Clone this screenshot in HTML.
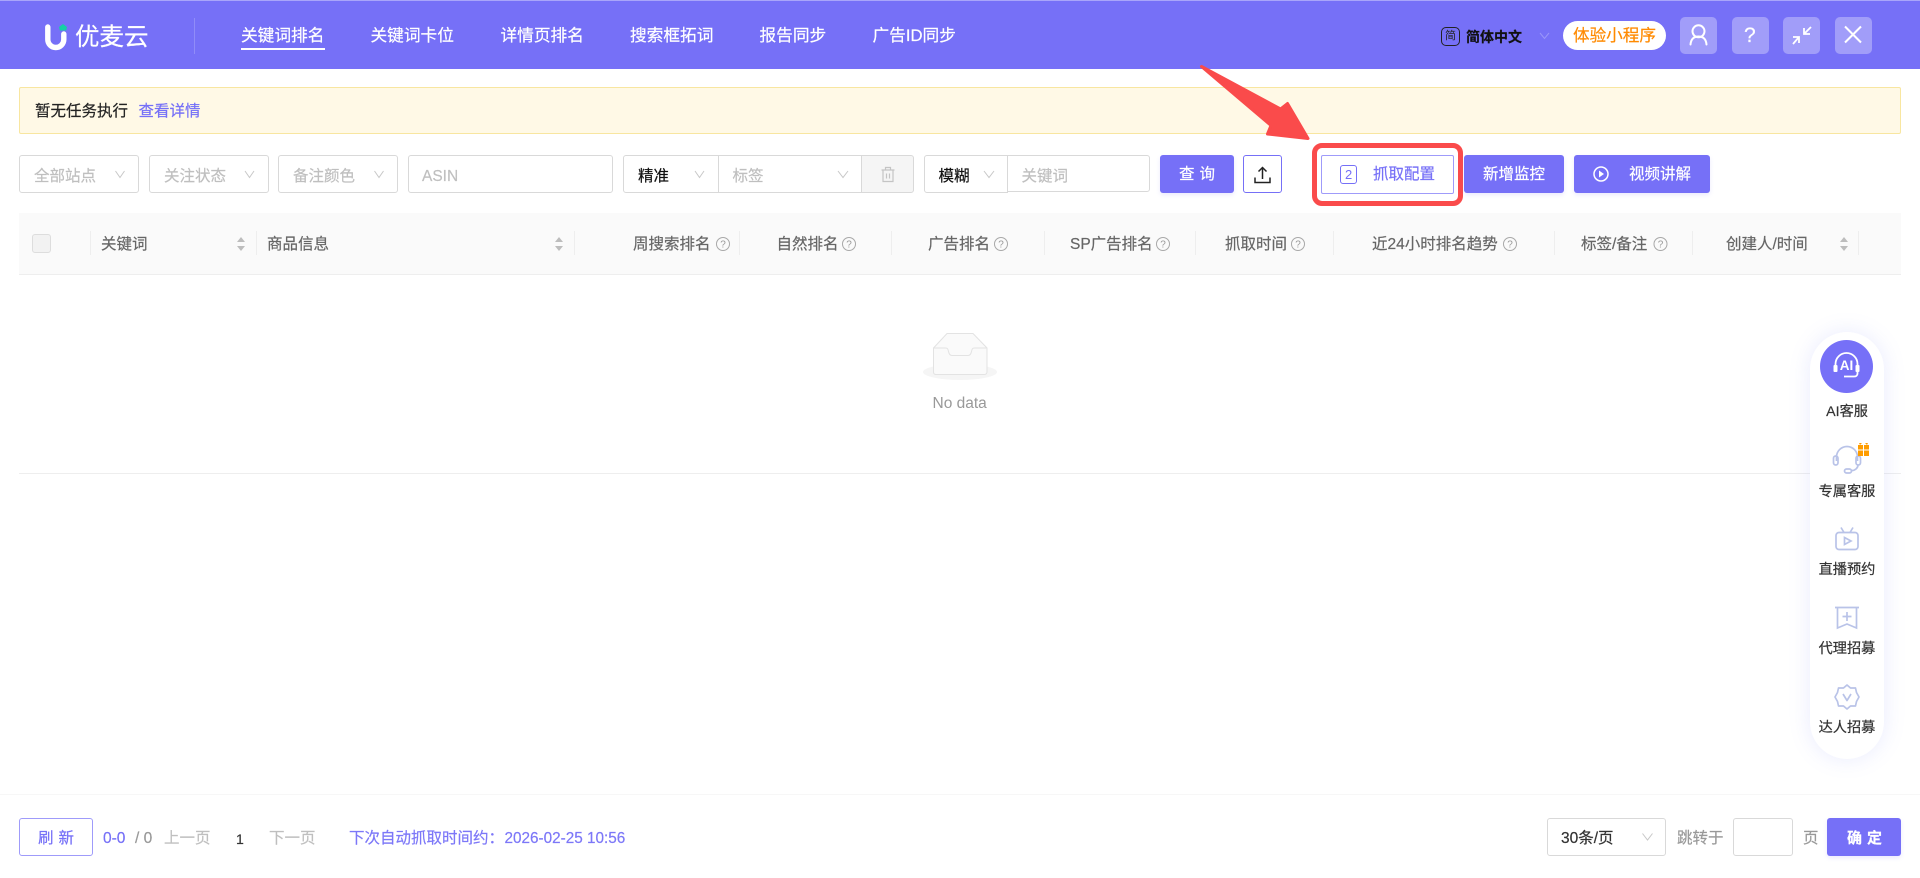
<!DOCTYPE html>
<html lang="zh">
<head>
<meta charset="utf-8">
<title>优麦云</title>
<style>
*{box-sizing:border-box}
html,body{margin:0;padding:0;width:1920px;height:878px;overflow:hidden;background:#fff;font-family:"Liberation Sans","Noto Sans CJK SC",sans-serif}
.a{position:absolute}
.t{position:absolute;white-space:nowrap;line-height:20px;font-size:15.5px;-webkit-text-stroke:.2px currentColor}
.n{color:#fff;font-size:16.7px;top:26px}
.box{position:absolute;background:#fff;border:1px solid #d9d9d9;border-radius:3px;top:155px;height:38px}
.ph{color:#bfbfbf;top:167px}
.hd{color:#666;top:235px}
.dv{position:absolute;top:231px;width:1px;height:24px;background:#eee}
.btn{position:absolute;top:155px;height:38px;background:#7670f7;border-radius:3px;box-shadow:0 2px 4px rgba(118,112,247,.15)}
.w{color:#fff;top:165px;font-size:15.5px}
.hb{position:absolute;top:17px;width:37px;height:37px;border-radius:5px;background:#a19df9}
.sl{color:#333;font-size:14.2px;width:74px;left:1810px;text-align:center}
.f{top:829px;font-size:15.5px}
svg{position:absolute;overflow:visible}
</style>
</head>
<body>
<!-- header -->
<div class="a" style="left:0;top:0;width:1920px;height:69px;background:#7670f7;border-top:1px solid #a9a5fa"></div>
<svg style="left:45px;top:24px" width="24" height="26" viewBox="0 0 24 26"><path d="M2.800 3v12.500a8 8 0 0 0 16 0V10" fill="none" stroke="#fff" stroke-width="5.400" stroke-linecap="round"/><path d="M14 3l4-3 4 3-.8 3.500h-6.400z" fill="#14d0a5"/></svg>
<span class="t" style="left:75px;top:26px;color:#fff;font-size:24.500px;line-height:24px">优麦云</span>
<div class="a" style="left:194px;top:18px;width:1px;height:36px;background:#908cf8"></div>
<span class="t n" style="left:241px">关键词排名</span>
<div class="a" style="left:241px;top:48px;width:84px;height:2px;background:#fff"></div>
<span class="t n" style="left:370.500px">关键词卡位</span>
<span class="t n" style="left:500.500px">详情页排名</span>
<span class="t n" style="left:630px">搜索框拓词</span>
<span class="t n" style="left:759.500px">报告同步</span>
<span class="t n" style="left:872.500px">广告ID同步</span>

<div class="a" style="left:1441px;top:27px;width:19px;height:19px;border:1.500px solid #222;border-radius:5px"></div>
<span class="t" style="left:1445px;top:26px;font-size:11px;color:#222;-webkit-text-stroke:0">简</span>
<span class="t" style="left:1466px;top:27px;font-size:14px;font-weight:700;color:#111">简体中文</span>
<svg style="left:1539px;top:32px" width="11" height="8"><path d="M1 1l4.500 5.500L10 1" fill="none" stroke="#9a96f9" stroke-width="1"/></svg>
<div class="a" style="left:1563px;top:21px;width:103px;height:29px;background:#fff;border-radius:15px"></div>
<span class="t" style="left:1573px;top:26px;font-size:16.600px;color:#ff8a00">体验小程序</span>

<div class="hb" style="left:1680px"></div>
<div class="hb" style="left:1732px"></div>
<div class="hb" style="left:1783px"></div>
<div class="hb" style="left:1835px"></div>
<svg style="left:1680px;top:17px" width="37" height="37"><circle cx="18.500" cy="14.300" r="6" fill="none" stroke="#fff" stroke-width="2"/><path d="M10.500 27.500c.5-5.500 3.500-8 8-8s7.500 2.500 8 8" fill="none" stroke="#fff" stroke-width="2" stroke-linecap="round"/></svg>
<span class="t" style="left:1744px;top:26px;font-size:21px;color:#fff">?</span>
<svg style="left:1783px;top:17px" width="37" height="37"><path d="M21 17l7-7M21 11v6h6M16 20l-6 7M10 20h6v6" fill="none" stroke="#fff" stroke-width="1.800"/></svg>
<svg style="left:1835px;top:17px" width="37" height="37"><path d="M10 9.500l16 16M26 9.500l-16 16" fill="none" stroke="#fff" stroke-width="2"/></svg>

<!-- alert -->
<div class="a" style="left:19px;top:87px;width:1882px;height:47px;background:#fff9e6;border:1px solid #f8e6a0;border-radius:2px"></div>
<span class="t" style="left:35px;top:102px;color:#222">暂无任务执行</span>
<span class="t" style="left:138.500px;top:102px;color:#7670f7">查看详情</span>

<!-- filters -->
<div class="box" style="left:19px;width:120px"></div>
<span class="t ph" style="left:34px">全部站点</span>
<div class="box" style="left:149px;width:120px"></div>
<span class="t ph" style="left:164px">关注状态</span>
<div class="box" style="left:278px;width:120px"></div>
<span class="t ph" style="left:293px">备注颜色</span>
<div class="box" style="left:408px;width:205px"></div>
<span class="t ph" style="left:422px">ASIN</span>
<div class="box" style="left:623px;width:96px;border-radius:3px 0 0 3px"></div>
<span class="t" style="left:638px;top:167px;color:#111">精准</span>
<div class="box" style="left:718px;width:144px;border-radius:0"></div>
<span class="t ph" style="left:732.500px">标签</span>
<div class="box" style="left:861px;width:53px;background:#f5f5f5;border-radius:0 3px 3px 0"></div>
<svg style="left:880px;top:166px" width="16" height="17"><path d="M1.500 4h13M5.500 4V1.500h5V4M3 4v11.500h10V4M6.500 7.500v5M9.500 7.500v5" fill="none" stroke="#c4c4c4" stroke-width="1.200"/></svg>
<div class="box" style="left:924px;width:84px;border-radius:3px 0 0 3px"></div>
<span class="t" style="left:938.500px;top:167px;color:#111">模糊</span>
<div class="box" style="left:1007px;width:143px;height:37px;border-radius:0 3px 3px 0"></div>
<span class="t ph" style="left:1021.500px">关键词</span>
<svg style="left:0;top:0" width="1" height="1">
<g fill="none" stroke="#c8c8c8" stroke-width="1">
<path d="M115.500 171l4.500 6.500 4.500-6.500M245 171l4.500 6.500 4.500-6.500M374.500 171l4.500 6.500 4.500-6.500M695 171l4.500 6.500 4.500-6.500M838 171l5 6.500 5-6.500M984 171l5 6.500 5-6.500"/>
</g></svg>
<div class="btn" style="left:1160px;width:74px"></div>
<span class="t w" style="left:1179px;letter-spacing:5px">查询</span>
<div class="a" style="left:1243px;top:155px;width:39px;height:38px;border:1px solid #7670f7;border-radius:3px;background:#fff"></div>
<svg style="left:1254px;top:166px" width="18" height="18"><path d="M8.500 13V2M4.500 5.500l4-4 4 4M1 11.500v5h15v-5" fill="none" stroke="#222" stroke-width="1.500"/></svg>
<div class="a" style="left:1321px;top:155px;width:133px;height:39px;border:1px solid #9f9bfa;border-radius:2px;background:#fff"></div>
<div class="a" style="left:1340px;top:165px;width:17px;height:19px;border:1px solid #7670f7;border-radius:3px"></div>
<span class="t" style="left:1345px;top:165px;font-size:13px;color:#7670f7;-webkit-text-stroke:0">2</span>
<span class="t" style="left:1373px;top:165px;color:#7670f7">抓取配置</span>
<div class="a" style="left:1312px;top:143px;width:151px;height:63px;border:5px solid #fa4b4b;border-radius:10px"></div>
<div class="btn" style="left:1464px;width:100px"></div>
<span class="t w" style="left:1483px">新增监控</span>
<div class="btn" style="left:1574px;width:136px"></div>
<svg style="left:1592px;top:165px" width="18" height="18"><circle cx="9" cy="9" r="7" fill="none" stroke="#fff" stroke-width="1.500"/><path d="M7 5.500l5 3.500-5 3.500z" fill="#fff"/></svg>
<span class="t w" style="left:1629px">视频讲解</span>

<!-- table head -->
<div class="a" style="left:19px;top:213px;width:1882px;height:62px;background:#fafafa;border-bottom:1px solid #eee"></div>
<div class="a" style="left:32px;top:234px;width:19px;height:19px;background:#f2f2f2;border:1px solid #ddd;border-radius:3px"></div>
<div class="dv" style="left:90px"></div><div class="dv" style="left:256px"></div><div class="dv" style="left:574px"></div><div class="dv" style="left:739px"></div><div class="dv" style="left:891px"></div><div class="dv" style="left:1044px"></div><div class="dv" style="left:1195px"></div><div class="dv" style="left:1333px"></div><div class="dv" style="left:1554px"></div><div class="dv" style="left:1692px"></div><div class="dv" style="left:1858px"></div>
<span class="t hd" style="left:101px">关键词</span>
<span class="t hd" style="left:267px">商品信息</span>
<span class="t hd" style="left:633px">周搜索排名</span>
<span class="t hd" style="left:776.500px">自然排名</span>
<span class="t hd" style="left:928px">广告排名</span>
<span class="t hd" style="left:1070px">SP广告排名</span>
<span class="t hd" style="left:1225px">抓取时间</span>
<span class="t hd" style="left:1372px">近24小时排名趋势</span>
<span class="t hd" style="left:1581px">标签/备注</span>
<span class="t hd" style="left:1726px">创建人/时间</span>
<svg style="left:0;top:0" width="1" height="1"><g fill="#bdbdbd">
<path d="M237 242l4-5 4 5zM237 246l4 5 4-5z"/>
<path d="M555 242l4-5 4 5zM555 246l4 5 4-5z"/>
<path d="M1840 242l4-5 4 5zM1840 246l4 5 4-5z"/>
</g>
<g fill="none" stroke="#a8a8a8" stroke-width="1">
<circle cx="723" cy="244" r="6.500"/><circle cx="849" cy="244" r="6.500"/><circle cx="1001" cy="244" r="6.500"/><circle cx="1163" cy="244" r="6.500"/><circle cx="1298" cy="244" r="6.500"/><circle cx="1510" cy="244" r="6.500"/><circle cx="1660.500" cy="244" r="6.500"/>
</g>
<g fill="#999" font-size="10" text-anchor="middle" font-family="Liberation Sans">
<text x="723" y="247.500">?</text><text x="849" y="247.500">?</text><text x="1001" y="247.500">?</text><text x="1163" y="247.500">?</text><text x="1298" y="247.500">?</text><text x="1510" y="247.500">?</text><text x="1660.500" y="247.500">?</text>
</g></svg>

<!-- empty -->
<svg style="left:920px;top:325px" width="80" height="60">
<ellipse cx="40" cy="47" rx="37" ry="8" fill="#f5f5f5"/>
<path d="M13.500 23L27 8.500h26L67 23v24a2.500 2.500 0 0 1-2.500 2.500h-49A2.500 2.500 0 0 1 13.500 47z" fill="#fafafa" stroke="#e3e3e3" stroke-width="1"/>
<path d="M13.500 23h12c2 0 2.500 1 3 3.500s1.500 4 3.500 4h16c2 0 3-1.500 3.500-4s1-3.500 3-3.500h12" fill="none" stroke="#e3e3e3" stroke-width="1"/>
</svg>
<span class="t" style="left:932.500px;top:394px;color:#999;font-size:15.500px;-webkit-text-stroke:0">No data</span>
<div class="a" style="left:19px;top:473px;width:1882px;height:1px;background:#eee"></div>

<!-- arrow -->
<svg style="left:0;top:0" width="1" height="1"><polygon points="1201.500,66.500 1280.500,109 1287.500,103.500 1308,138.500 1267.500,134 1271,125.500" fill="#fa4b4b" stroke="#fa4b4b" stroke-width="3" stroke-linejoin="round"/></svg>

<!-- side panel -->
<div class="a" style="left:1810px;top:332px;width:74px;height:427px;background:#fff;border-radius:37px;box-shadow:0 0 22px rgba(120,130,250,.16)"></div>
<div class="a" style="left:1820px;top:339.500px;width:53px;height:53px;border-radius:50%;background:#7670f7"></div>
<svg style="left:1820px;top:339px" width="53" height="53"><path d="M15.500 27v-2a11 11 0 0 1 22 0v2" fill="none" stroke="#fff" stroke-width="1.800"/><rect x="13.500" y="26" width="4" height="7" rx="1" fill="#fff"/><rect x="35.500" y="26" width="4" height="7" rx="1" fill="#fff"/><path d="M37.500 33v1.500c0 2-1.500 3-3.500 3H24" fill="none" stroke="#fff" stroke-width="1.800"/></svg>
<span class="t" style="left:1820px;top:355.500px;width:53px;text-align:center;color:#fff;font-size:13.500px;font-weight:700;-webkit-text-stroke:0">AI</span>
<span class="t sl" style="top:402px">AI客服</span>

<svg style="left:1832px;top:445px" width="42" height="30"><g fill="none" stroke="#b9c3e8" stroke-width="1.700"><path d="M4.500 16v-4a10.500 10.500 0 0 1 21 0v4"/><rect x="1.500" y="11" width="4.500" height="9" rx="2.200"/><rect x="24" y="11" width="4.500" height="9" rx="2.200"/><path d="M26 20c0 3-3 5.500-6 5.500"/><rect x="12.500" y="24" width="7" height="4" rx="2"/></g><rect x="26" y="0" width="11" height="11" fill="#ff9d00"/><path d="M26 5h11M31.500 0v11" stroke="#fff" stroke-width="1"/><path d="M28 0l-1-2h3zM35 0l1-2h-3z" fill="#ff9d00"/></svg>
<span class="t sl" style="top:481.500px">专属客服</span>

<svg style="left:1834px;top:526px" width="26" height="26"><g fill="none" stroke="#b9c3e8" stroke-width="1.700"><rect x="2" y="6.500" width="22" height="17" rx="3"/><path d="M7 1.500l3 5M19 1.500l-3 5"/><path d="M10.500 11.500l6.500 3.500-6.500 3.500z"/></g></svg>
<span class="t sl" style="top:560px">直播预约</span>

<svg style="left:1834px;top:606px" width="26" height="26"><g fill="none" stroke="#b9c3e8" stroke-width="1.700"><path d="M1 1.500h24"/><path d="M3.500 1.500v20.500l9.500-4 9.500 4V1.500"/><path d="M13 6v9M8.500 10.500h9"/></g></svg>
<span class="t sl" style="top:639px">代理招募</span>

<svg style="left:1834px;top:684px" width="26" height="26"><g fill="none" stroke="#b9c3e8" stroke-width="1.700" stroke-linejoin="round"><path d="M13 1l3.500 3h5l1 4.500L25 13l-2.500 4.500-1 4.500h-5L13 25l-3.500-3h-5l-1-4.500L1 13l2.500-4.500 1-4.500h5z"/><path d="M9 10l4 6.500 4-6.500"/></g></svg>
<span class="t sl" style="top:718px">达人招募</span>

<!-- footer -->
<div class="a" style="left:0;top:794px;width:1920px;height:1px;background:#f7f7f7"></div>
<div class="a" style="left:19px;top:818px;width:74px;height:38px;border:1px solid #9f9bfa;border-radius:3px"></div>
<span class="t f" style="left:38px;color:#7670f7;letter-spacing:5px">刷新</span>
<span class="t f" style="left:103px;top:829px;color:#7670f7">0-0</span>
<span class="t f" style="left:135px;top:829px;color:#999">/ 0</span>
<span class="t f" style="left:164px;color:#bfbfbf">上一页</span>
<span class="t f" style="left:236px;color:#333;font-size:14px">1</span>
<span class="t f" style="left:269px;color:#bfbfbf">下一页</span>
<span class="t f" style="left:349px;color:#7c77f8">下次自动抓取时间约：</span>
<span class="t f" style="left:504.500px;color:#7c77f8;font-size:15.300px">2026-02-25 10:56</span>
<div class="a" style="left:1547px;top:818px;width:119px;height:38px;border:1px solid #d9d9d9;border-radius:3px"></div>
<span class="t f" style="left:1561px;color:#333">30条/页</span>
<svg style="left:1642px;top:833px" width="11" height="8"><path d="M.5 .5l5 6.500 5-6.500" fill="none" stroke="#c8c8c8" stroke-width="1"/></svg>
<span class="t f" style="left:1677px;color:#999">跳转于</span>
<div class="a" style="left:1733px;top:818px;width:60px;height:38px;border:1px solid #d9d9d9;border-radius:3px"></div>
<span class="t f" style="left:1803px;color:#999">页</span>
<div class="btn" style="left:1827px;top:818px;width:74px"></div>
<span class="t f" style="left:1847px;color:#fff;font-size:15px;font-weight:700;letter-spacing:5px">确定</span>
</body>
</html>
